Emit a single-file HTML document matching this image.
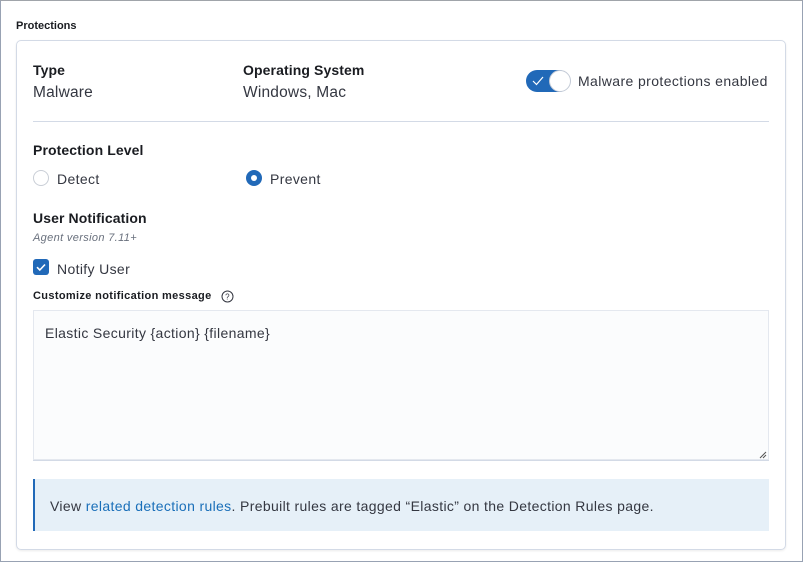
<!DOCTYPE html>
<html><head><meta charset="utf-8"><style>
*{box-sizing:border-box;margin:0;padding:0}
body{width:803px;height:562px;background:#fff;font-family:"Liberation Sans",sans-serif;color:#343741;position:relative;overflow:hidden;letter-spacing:0.35px}
.frame{position:absolute;left:0;top:0;width:803px;height:562px;border:1px solid #98a2b3;border-top-color:#a0a4aa}
.abs{position:absolute;white-space:nowrap}
.panel{position:absolute;left:16px;top:40px;width:770px;height:510px;border:1px solid #d3dae6;border-radius:5px;box-shadow:0 1px 2px rgba(0,0,0,.08)}
.h{font-weight:bold;font-size:14px;color:#1a1c21;letter-spacing:0.1px}
.t{font-size:15.5px;color:#343741;letter-spacing:0.2px}
</style></head><body>
<div class="frame"></div>
<div class="abs" style="left:16px;top:20px;font-size:11px;font-weight:bold;color:#1a1c21;letter-spacing:0">Protections</div>
<div class="panel"></div>
<div class="abs h" style="left:33px;top:62px">Type</div>
<div class="abs t" style="left:33px;top:84px">Malware</div>
<div class="abs h" style="left:243px;top:62px">Operating System</div>
<div class="abs t" style="left:243px;top:84px">Windows, Mac</div>
<div class="abs" style="left:526px;top:70px;width:44px;height:22px;border-radius:11px;background:#2169b8"></div>
<svg class="abs" style="left:531px;top:75px" width="14" height="12"><path d="M2 6l3.5 3.5L12 2" stroke="#fff" stroke-width="1.2" fill="none"/></svg>
<div class="abs" style="left:549px;top:70px;width:22px;height:22px;border-radius:50%;background:#fff;border:1px solid #c3cad6"></div>
<div class="abs" style="left:578px;top:73px;font-size:14px;letter-spacing:0.4px">Malware protections enabled</div>
<div class="abs" style="left:33px;top:121px;width:736px;height:1px;background:#d3dae6"></div>
<div class="abs h" style="left:33px;top:142px">Protection Level</div>
<div class="abs" style="left:33px;top:170px;width:16px;height:16px;border-radius:50%;border:1px solid #c9ced6;background:#fff"></div>
<div class="abs" style="left:57px;top:171px;font-size:14px">Detect</div>
<div class="abs" style="left:246px;top:170px;width:16px;height:16px;border-radius:50%;background:#2169b8"></div>
<div class="abs" style="left:251px;top:175px;width:6px;height:6px;border-radius:50%;background:#fff"></div>
<div class="abs" style="left:270px;top:171px;font-size:14px">Prevent</div>
<div class="abs h" style="left:33px;top:210px">User Notification</div>
<div class="abs" style="left:33px;top:232px;font-size:11px;font-style:italic;color:#69707d">Agent version 7.11+</div>
<div class="abs" style="left:33px;top:259px;width:16px;height:16px;border-radius:3px;background:#2169b8"></div>
<svg class="abs" style="left:33px;top:259px" width="16" height="16"><path d="M4 8.2l2.8 2.8L12 5.5" stroke="#fff" stroke-width="1.6" fill="none"/></svg>
<div class="abs" style="left:57px;top:261px;font-size:14px">Notify User</div>
<div class="abs" style="left:33px;top:290px;font-size:11px;font-weight:bold;color:#1a1c21">Customize notification message</div>
<svg class="abs" style="left:221px;top:290px" width="13" height="13"><circle cx="6.5" cy="6.5" r="5.5" stroke="#343741" fill="none"/><text x="6.5" y="9.5" font-size="8" text-anchor="middle" fill="#343741" font-family="Liberation Sans">?</text></svg>
<div class="abs" style="left:33px;top:310px;width:736px;height:150px;background:#fbfcfd;border:1px solid #e4e8ef;box-shadow:0 1px 0 #d3dae6"></div>
<div class="abs" style="left:45px;top:325px;font-size:14px">Elastic Security {action} {filename}</div>
<svg class="abs" style="left:758px;top:450px" width="9" height="9"><path d="M8 2L2 8M8 5L5 8" stroke="#555" stroke-width="1"/></svg>
<div class="abs" style="left:33px;top:479px;width:736px;height:52px;background:#e6f0f8;border-left:2px solid #2169b8"></div>
<div class="abs" style="left:50px;top:498px;font-size:14px">View <span style="color:#1a6fb9">related detection rules</span>. Prebuilt rules are tagged “Elastic” on the Detection Rules page.</div>
</body></html>
